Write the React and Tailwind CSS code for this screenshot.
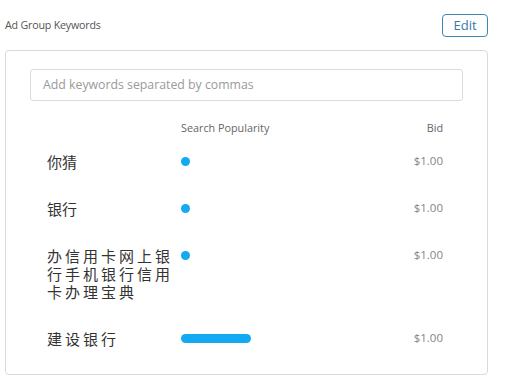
const keywords = [
  { text: "你猜", popularity: 9, spaced: false },
  { text: "银行", popularity: 9, spaced: false },
  { text: "办信用卡网上银行手机银行信用卡办理宝典", popularity: 9, spaced: true },
  { text: "建设银行", popularity: 70, spaced: true },
];

const App = () => {
  return (
    <div
      style={{ fontFamily: "'Open Sans', 'Noto Sans CJK SC', sans-serif" }}
      className="w-[525px] h-[391px] bg-white"
    >
      <div className="w-[488px] pt-[14px] pl-[5px]">
        <div className="flex items-center justify-between">
          <h2 className="text-[10.7px] text-[#555] tracking-[-0.2px]">Ad Group Keywords</h2>
          <button className="h-[23px] w-[46px] border border-[#3d87b6] rounded-[4px] text-[13px] text-[#3579ab] leading-none">
            Edit
          </button>
        </div>

        <div className="mt-[13px] border border-[#dadada] rounded-[4px] px-6 pt-[18px] pb-[12px]">
          <div className="h-[32px] border border-[#dcdcdc] rounded-[3px] flex items-center pl-[12px] text-[12.3px] text-[#9a9a9a]">
            Add keywords separated by commas
          </div>

          <div className="mt-[19px] pl-[17px] pr-[20px]">
            <div className="grid grid-cols-[134px_1fr_auto] text-[10.8px] text-[#666] leading-[16px] mb-[2px]">
              <span />
              <span>Search Popularity</span>
              <span>Bid</span>
            </div>

            {keywords.map((k) => (
              <div key={k.text} className="grid grid-cols-[134px_1fr_auto] py-[14.5px] items-start">
                <span
                  className={
                    "text-[15px] leading-[18px] text-[#333] pr-[6px] " +
                    (k.spaced ? "tracking-[3px]" : "")
                  }
                >
                  {k.text}
                </span>
                <div className="h-[18px] flex items-center">
                  <div
                    className="h-[9px] rounded-full bg-[#13aaf1]"
                    style={{ width: k.popularity }}
                  />
                </div>
                <span className="text-[11.5px] leading-[16px] text-[#858585]">$1.00</span>
              </div>
            ))}
          </div>
        </div>
      </div>
    </div>
  );
};

export default App;
